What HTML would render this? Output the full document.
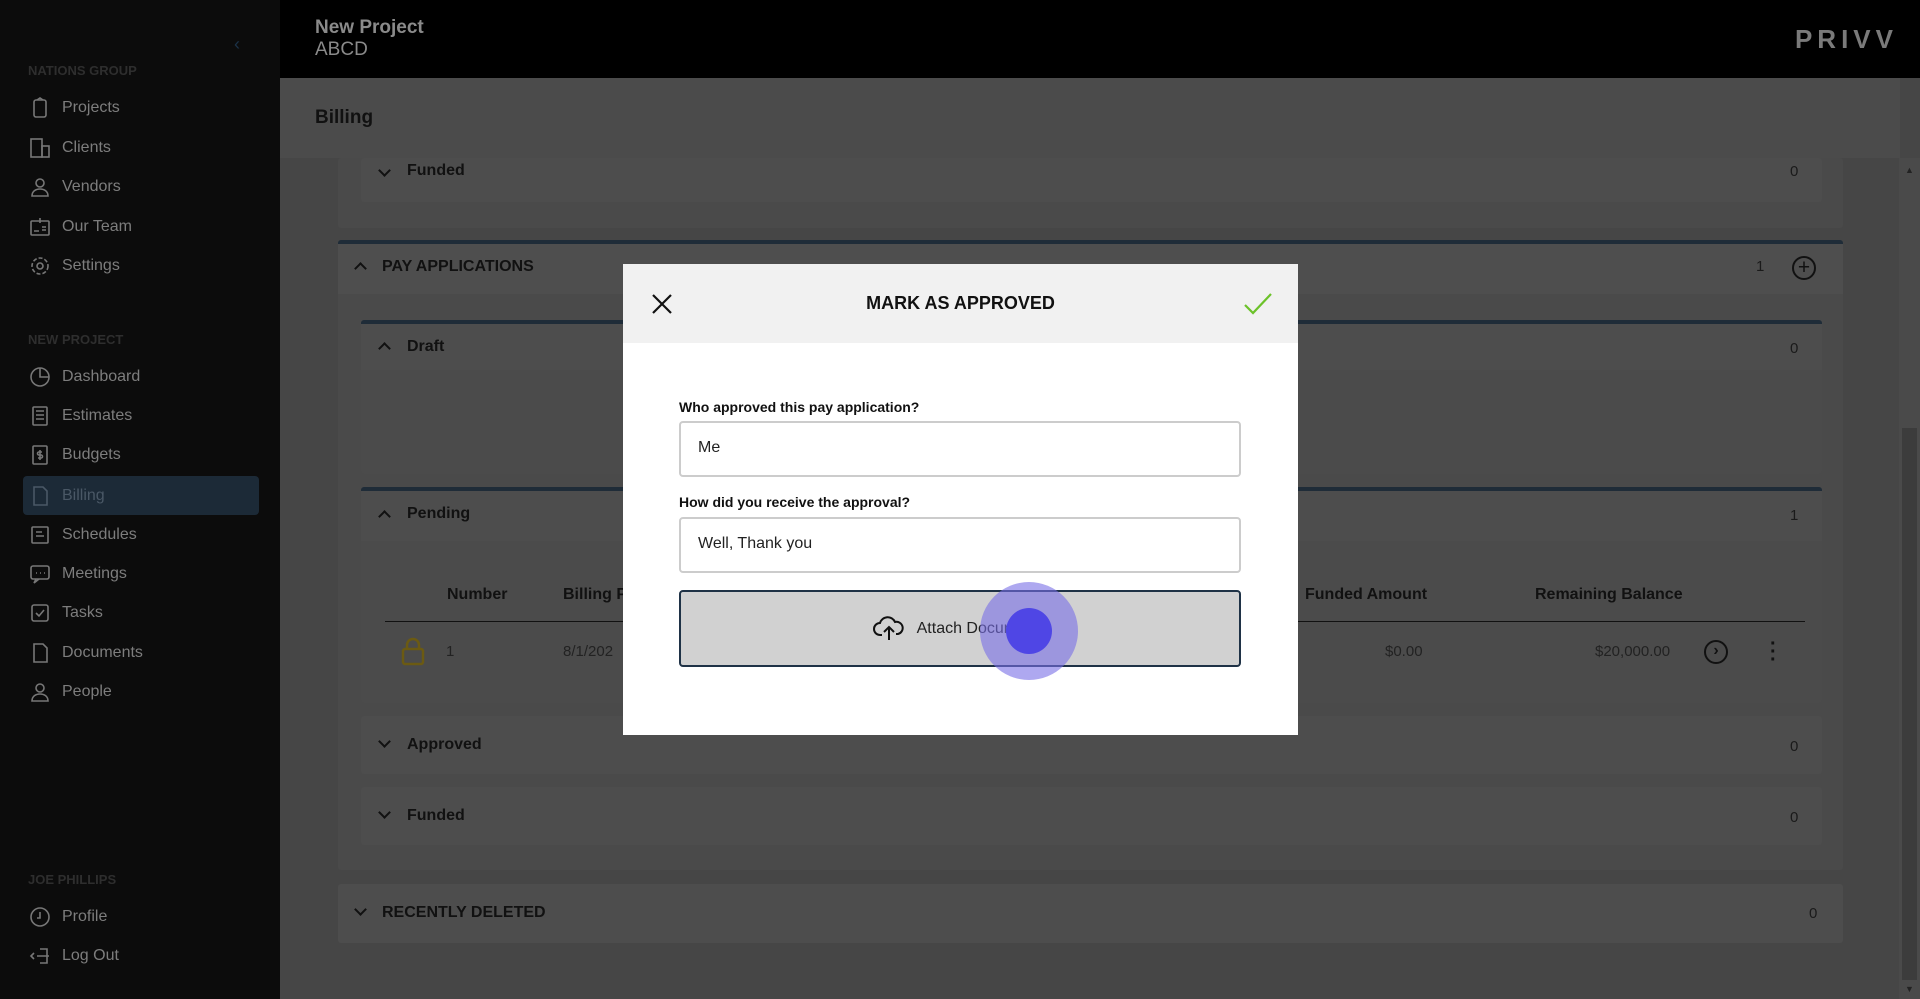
<!DOCTYPE html>
<html><head><meta charset="utf-8"><style>
*{box-sizing:border-box;margin:0;padding:0}
body{width:1920px;height:999px;overflow:hidden;font-family:"Liberation Sans",sans-serif;background:#464646;position:relative}
.sb{position:absolute;left:0;top:0;width:280px;height:999px;background:#0c0c0c}
.sec{position:absolute;left:28px;font-size:13px;color:#2e2e2e;font-weight:bold}
.it{position:absolute;left:28px;height:24px;display:flex;align-items:center;color:#7d7d7d;font-size:16px}
.it svg{width:24px;height:24px;margin-right:10px;stroke:#777;fill:none;stroke-width:1.6}
.hl{position:absolute;left:23px;top:476px;width:236px;height:39px;background:#1c2a37;border-radius:4px}
.top{position:absolute;left:280px;top:0;width:1640px;height:78px;background:#000}
.abs{position:absolute}
.card{position:absolute;background:#4a4a4a;border-radius:3px}
.hdr{position:absolute;font-weight:bold;color:#111;font-size:16px}
.cnt{position:absolute;color:#1a1a1a;font-size:15px}
.bar{position:absolute;height:4px;background:#1f2c38;border-radius:3px 3px 0 0}
.chev{position:absolute;width:9px;height:9px;border-left:2.5px solid #111;border-top:2.5px solid #111}
.up{transform:rotate(45deg)}.dn{transform:rotate(225deg)}
</style></head><body>
<div class="sb">
<div class="abs" style="left:234px;top:34px;color:#1b3248;font-size:18px">‹</div>
<div class="sec" style="top:63px">NATIONS GROUP</div>
<div class="it" style="top:96px"><svg viewBox="0 0 24 24"><rect x="6" y="4" width="12" height="17" rx="2"/><path d="M9 4l3-2 3 2"/></svg>Projects</div>
<div class="it" style="top:136px"><svg viewBox="0 0 24 24"><rect x="3" y="3" width="11" height="18"/><rect x="14" y="10" width="7" height="11"/></svg>Clients</div>
<div class="it" style="top:175px"><svg viewBox="0 0 24 24"><circle cx="12" cy="8" r="4"/><path d="M4 21c0-5 4-7 8-7s8 2 8 7z"/></svg>Vendors</div>
<div class="it" style="top:215px"><svg viewBox="0 0 24 24"><rect x="3" y="6" width="18" height="14" rx="1"/><path d="M12 3v5M6 16h5M14 12h4M14 15h4"/></svg>Our Team</div>
<div class="it" style="top:254px"><svg viewBox="0 0 24 24"><circle cx="12" cy="12" r="3"/><circle cx="12" cy="12" r="8" stroke-dasharray="4 2"/></svg>Settings</div>
<div class="sec" style="top:332px">NEW PROJECT</div>
<div class="it" style="top:365px"><svg viewBox="0 0 24 24"><circle cx="12" cy="12" r="9"/><path d="M12 3v9h9"/></svg>Dashboard</div>
<div class="it" style="top:404px"><svg viewBox="0 0 24 24"><rect x="5" y="3" width="14" height="18" rx="1"/><path d="M8 7h8M8 11h8M8 15h8"/></svg>Estimates</div>
<div class="it" style="top:443px"><svg viewBox="0 0 24 24"><rect x="5" y="3" width="14" height="18" rx="1"/><path d="M12 7v10M14 9h-3a1.5 1.5 0 000 3h2a1.5 1.5 0 010 3h-3"/></svg>Budgets</div>
<div class="hl"></div>
<div class="it" style="top:484px;color:#4a5866"><svg viewBox="0 0 24 24" style="stroke:#4a5866"><path d="M6 3h9l4 4v14H6z"/></svg>Billing</div>
<div class="it" style="top:523px"><svg viewBox="0 0 24 24"><rect x="4" y="4" width="16" height="16" rx="1"/><path d="M8 9h6M8 13h8"/></svg>Schedules</div>
<div class="it" style="top:562px"><svg viewBox="0 0 24 24"><rect x="3" y="4" width="18" height="13" rx="2"/><path d="M8 17l-2 4 5-4M8 11h1M12 11h1M16 11h1"/></svg>Meetings</div>
<div class="it" style="top:601px"><svg viewBox="0 0 24 24"><rect x="4" y="4" width="16" height="16" rx="2"/><path d="M8 12l3 3 5-6"/></svg>Tasks</div>
<div class="it" style="top:641px"><svg viewBox="0 0 24 24"><path d="M6 3h9l4 4v14H6z"/></svg>Documents</div>
<div class="it" style="top:680px"><svg viewBox="0 0 24 24"><circle cx="12" cy="8" r="4"/><path d="M4 21c0-5 4-7 8-7s8 2 8 7z"/></svg>People</div>
<div class="sec" style="top:872px">JOE PHILLIPS</div>
<div class="it" style="top:905px"><svg viewBox="0 0 24 24"><circle cx="12" cy="12" r="9"/><path d="M12 7v6H9"/></svg>Profile</div>
<div class="it" style="top:944px"><svg viewBox="0 0 24 24"><path d="M9 12h12M6 9l-3 3 3 3M12 5h7v14h-7"/></svg>Log Out</div>
</div>
<div class="top">
<div class="abs" style="left:35px;top:17px;color:#8a8a8a;font-weight:bold;font-size:19px">New Project</div>
<div class="abs" style="left:35px;top:39px;color:#8a8a8a;font-size:19px">ABCD</div>
<div class="abs" style="right:22px;top:24px;color:#7a7a7a;font-weight:900;font-size:26px;letter-spacing:5px">PRIVV</div>
</div>
<div class="abs" style="left:280px;top:78px;width:1620px;height:80px;background:#4b4b4b"></div>
<div class="abs" style="left:315px;top:107px;font-size:19px;font-weight:bold;color:#111">Billing</div>
<div class="abs" style="left:1899px;top:158px;width:21px;height:841px;background:#4a4a4a"></div>
<div class="abs" style="left:1902px;top:428px;width:15px;height:552px;background:#3c3c3c"></div>
<div class="abs" style="left:1905px;top:165px;color:#222;font-size:9px">▲</div>
<div class="abs" style="left:1905px;top:984px;color:#222;font-size:9px">▼</div>
<div class="card" style="left:338px;top:158px;width:1505px;height:70px;background:#4a4a4a"></div>
<div class="card" style="left:361px;top:158px;width:1461px;height:44px;background:#4d4d4d"></div>
<div class="chev dn" style="left:380px;top:166px"></div>
<div class="hdr" style="left:407px;top:162px">Funded</div>
<div class="cnt" style="left:1790px;top:163px">0</div>
<div class="bar" style="left:338px;top:240px;width:1505px"></div>
<div class="card" style="left:338px;top:244px;width:1505px;height:626px;border-radius:0 0 3px 3px"></div>
<div class="abs" style="left:338px;top:244px;width:1505px;height:50px;background:#4e4e4e"></div>
<div class="chev up" style="left:356px;top:264px"></div>
<div class="hdr" style="left:382px;top:258px;font-size:16px;font-weight:900">PAY APPLICATIONS</div>
<div class="cnt" style="left:1756px;top:258px">1</div>
<div class="abs" style="left:1792px;top:256px;width:24px;height:24px;border:2px solid #111;border-radius:50%;text-align:center;line-height:19px;font-size:21px;color:#111">+</div>
<div class="bar" style="left:361px;top:320px;width:1461px"></div>
<div class="card" style="left:361px;top:324px;width:1461px;height:150px;background:#4b4b4b"></div>
<div class="abs" style="left:361px;top:324px;width:1461px;height:46px;background:#4d4d4d"></div>
<div class="chev up" style="left:380px;top:344px"></div>
<div class="hdr" style="left:407px;top:338px">Draft</div>
<div class="cnt" style="left:1790px;top:340px">0</div>
<div class="bar" style="left:361px;top:487px;width:1461px"></div>
<div class="card" style="left:361px;top:491px;width:1461px;height:212px;background:#4b4b4b"></div>
<div class="abs" style="left:361px;top:491px;width:1461px;height:50px;background:#4d4d4d"></div>
<div class="chev up" style="left:380px;top:512px"></div>
<div class="hdr" style="left:407px;top:505px">Pending</div>
<div class="cnt" style="left:1790px;top:507px">1</div>
<div class="hdr" style="left:447px;top:586px;font-size:16px">Number</div>
<div class="hdr" style="left:563px;top:586px;font-size:16px">Billing P</div>
<div class="hdr" style="left:1305px;top:586px;font-size:16px">Funded Amount</div>
<div class="hdr" style="left:1535px;top:586px;font-size:16px">Remaining Balance</div>
<div class="abs" style="left:385px;top:621px;width:1420px;height:1px;background:#111"></div>
<svg class="abs" style="left:400px;top:636px" width="26" height="30" viewBox="0 0 26 30"><rect x="3" y="13" width="20" height="15" rx="2" fill="none" stroke="#6b5a12" stroke-width="2.5"/><path d="M7 13V9a6 6 0 0112 0v4" fill="none" stroke="#6b5a12" stroke-width="2.5"/></svg>
<div class="cnt" style="left:446px;top:643px;color:#222">1</div>
<div class="cnt" style="left:563px;top:643px;color:#222">8/1/202</div>
<div class="cnt" style="left:1385px;top:643px;color:#222">$0.00</div>
<div class="cnt" style="left:1595px;top:643px;color:#222">$20,000.00</div>
<div class="abs" style="left:1704px;top:640px;width:24px;height:24px;border:2px solid #111;border-radius:50%;text-align:center;line-height:18px;font-size:16px;font-weight:bold;color:#111">›</div>
<div class="abs" style="left:1770px;top:640px;color:#111;font-size:20px;font-weight:bold;line-height:8px">·<br>·<br>·</div>
<div class="card" style="left:361px;top:716px;width:1461px;height:58px;background:#4d4d4d"></div>
<div class="chev dn" style="left:380px;top:737px"></div>
<div class="hdr" style="left:407px;top:736px">Approved</div>
<div class="cnt" style="left:1790px;top:738px">0</div>
<div class="card" style="left:361px;top:787px;width:1461px;height:58px;background:#4d4d4d"></div>
<div class="chev dn" style="left:380px;top:808px"></div>
<div class="hdr" style="left:407px;top:807px">Funded</div>
<div class="cnt" style="left:1790px;top:809px">0</div>
<div class="card" style="left:338px;top:884px;width:1505px;height:59px;background:#4d4d4d"></div>
<div class="chev dn" style="left:356px;top:905px"></div>
<div class="hdr" style="left:382px;top:904px;font-size:16px;font-weight:900">RECENTLY DELETED</div>
<div class="cnt" style="left:1809px;top:905px">0</div>
<div class="abs" style="left:623px;top:264px;width:675px;height:471px;background:#fff">
<div style="height:79px;background:#f1f1f1;position:relative">
<svg class="abs" style="left:28px;top:29px" width="22" height="22" viewBox="0 0 22 22"><path d="M2 2l18 18M20 2L2 20" stroke="#111" stroke-width="2.2"/></svg>
<div class="abs" style="left:0;width:675px;top:29px;text-align:center;font-weight:bold;font-size:18px;color:#111">MARK AS APPROVED</div>
<svg class="abs" style="left:620px;top:28px" width="30" height="24" viewBox="0 0 30 24"><path d="M2 13l8 8L28 2" fill="none" stroke="#6cc22a" stroke-width="2.2"/></svg>
</div>
<div class="abs" style="left:56px;top:135px;font-weight:bold;font-size:14px;color:#111">Who approved this pay application?</div>
<div class="abs" style="left:56px;top:157px;width:562px;height:56px;border:2px solid #ccc;border-radius:4px;padding:16px 17px;font-size:16px;color:#222">Me</div>
<div class="abs" style="left:56px;top:230px;font-weight:bold;font-size:14px;color:#111">How did you receive the approval?</div>
<div class="abs" style="left:56px;top:253px;width:562px;height:56px;border:2px solid #ccc;border-radius:4px;padding:16px 17px;font-size:16px;color:#222">Well, Thank you</div>
<div class="abs" style="left:56px;top:326px;width:562px;height:77px;border:2.5px solid #1f3246;border-radius:4px;background:#d1d1d1;display:flex;align-items:center;justify-content:center;font-size:16px;color:#222">
<svg width="32" height="26" viewBox="0 0 32 26" style="margin-right:12px"><path d="M9 19H7a6 6 0 010-12 8 8 0 0115-1 6 6 0 013 12h-2" fill="none" stroke="#111" stroke-width="2"/><path d="M16 24V12M11 16l5-5 5 5" fill="none" stroke="#111" stroke-width="2"/></svg>Attach Documents</div>
</div>
<div class="abs" style="left:980px;top:582px;width:98px;height:98px;border-radius:50%;background:rgba(120,110,230,.6)"></div>
<div class="abs" style="left:1006px;top:608px;width:46px;height:46px;border-radius:50%;background:#4f46e5"></div>
</body></html>
